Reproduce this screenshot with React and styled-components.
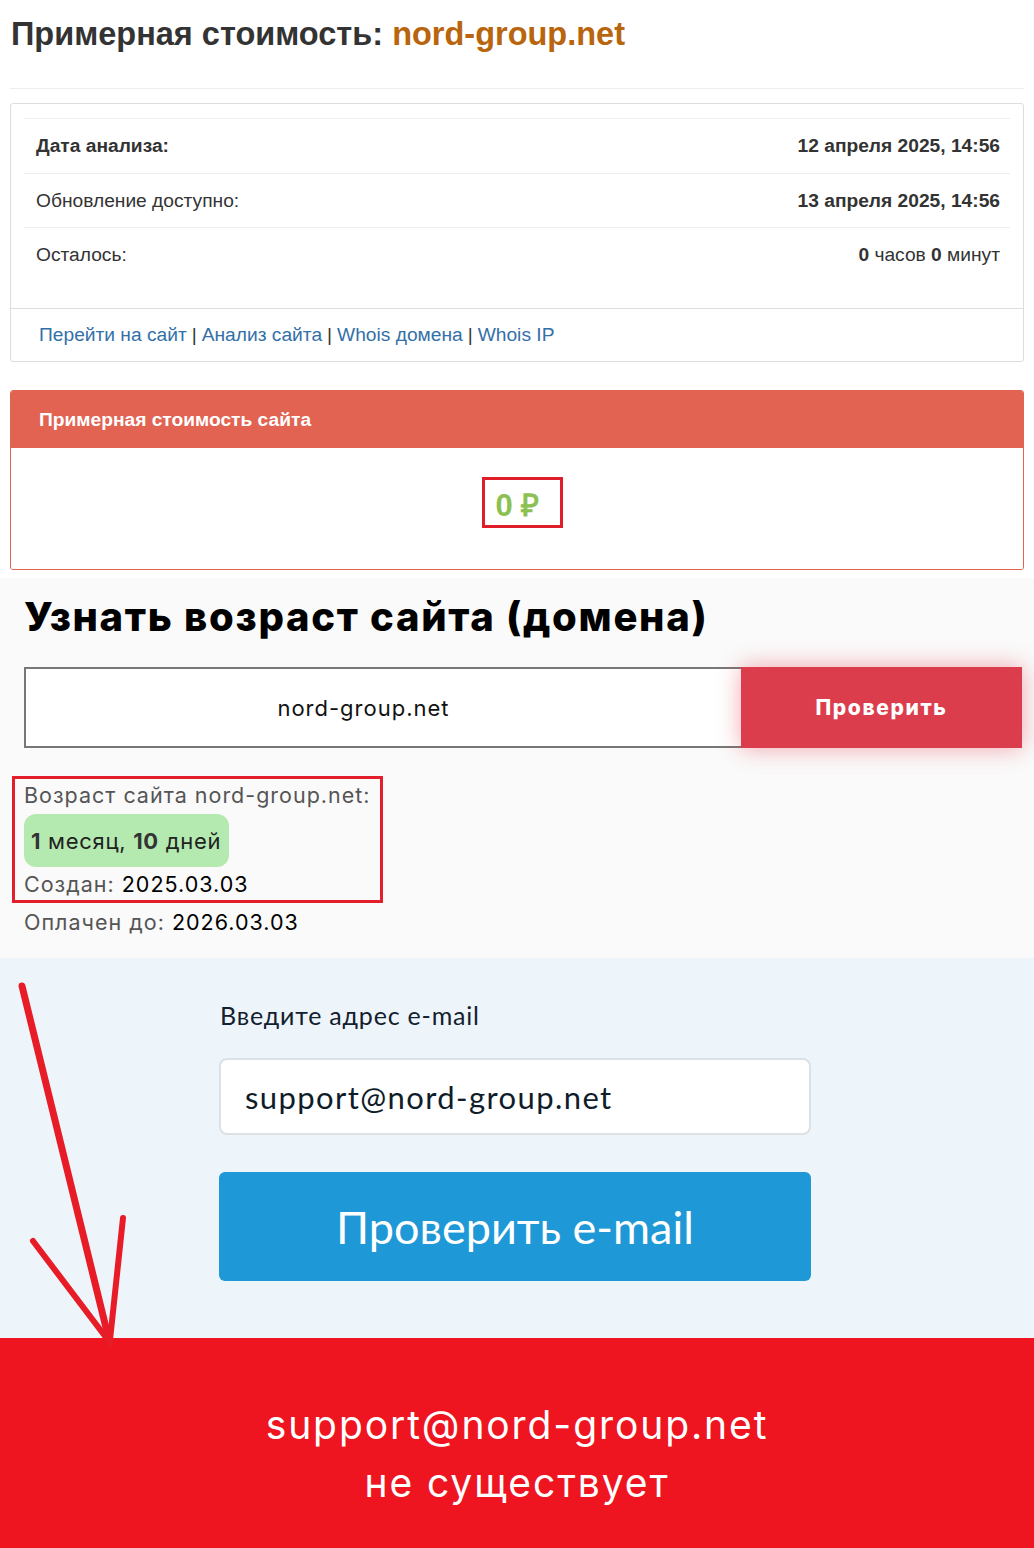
import React from "react";
import styled, { createGlobalStyle } from "styled-components";

const Global = createGlobalStyle`
  html, body { margin: 0; padding: 0; background: #fff; }
  body { width: 1034px; }
  * { box-sizing: border-box; }
`;

const Page = styled.div`
  position: relative;
  width: 1034px;
  font-family: "Liberation Sans", Arial, sans-serif;
`;

/* ---------- section 1 ---------- */
const CostSection = styled.section`
  background: #fff;
  padding: 14px 10px 8px;
`;

const Title = styled.h1`
  margin: 0;
  font-size: 32.5px;
  line-height: 40px;
  font-weight: 700;
  color: #333;
  padding-left: 1px;
`;

const Domain = styled.span`
  color: #b8650e;
`;

const Rule = styled.hr`
  border: 0;
  border-top: 1px solid #eee;
  margin: 34px 0 14px;
`;

const Card = styled.div`
  border: 1px solid #ddd;
  border-radius: 3px;
  background: #fff;
`;

const CardBody = styled.div`
  padding: 14px 13px 27px;
`;

const Table = styled.div`
  border-top: 1px solid #eee;
`;

const Row = styled.div`
  display: flex;
  justify-content: space-between;
  align-items: center;
  height: 54px;
  padding: 0 10px 0 12px;
  border-top: ${(p) => (p.$first ? "none" : "1px solid #eee")};
  font-size: 19.2px;
  color: #333;
`;

const Label = styled.span`
  font-weight: ${(p) => (p.$bold ? 700 : 400)};
`;

const Value = styled.span`
  font-weight: ${(p) => (p.$bold ? 700 : 400)};
  b { font-weight: 700; }
`;

const CardFooter = styled.div`
  border-top: 1px solid #ddd;
  height: 53px;
  display: flex;
  align-items: center;
  padding-left: 28px;
  font-size: 19.2px;
  color: #333;
`;

const Link = styled.a`
  color: #3370a8;
  text-decoration: none;
`;

const Sep = styled.span`
  margin: 0 5px;
`;

const PricePanel = styled.div`
  margin-top: 28px;
  border: 1px solid #e26351;
  border-radius: 3px;
  overflow: hidden;
`;

const PanelHead = styled.div`
  background: #e26352;
  height: 57px;
  display: flex;
  align-items: center;
  padding-left: 28px;
  color: #fff;
  font-weight: 700;
  font-size: 19.2px;
`;

const PanelBody = styled.div`
  height: 121px;
  display: flex;
  justify-content: center;
  padding: 29px 0 0 10px;
  background: #fff;
`;

const PriceBox = styled.div`
  border: 3px solid #e01e2a;
  width: 81px;
  height: 51px;
  display: flex;
  align-items: center;
  padding: 2px 0 0 11px;
  font-size: 31px;
  font-weight: 700;
  color: #8cc152;
  white-space: nowrap;
`;

/* ---------- section 2 ---------- */
const AgeSection = styled.section`
  background: #fafafa;
  padding: 14px 12px 22px 24px;
  font-family: "Inter", "Noto Sans", sans-serif;
`;

const AgeTitle = styled.h2`
  margin: 0;
  font-size: 40px;
  line-height: 50px;
  font-weight: 800;
  color: #000;
  letter-spacing: 1.7px;
`;

const SearchRow = styled.div`
  display: flex;
  margin-top: 25px;
  height: 81px;
`;

const DomainInput = styled.div`
  flex: 1;
  border: 2px solid #777;
  border-right: 0;
  background: #fff;
  display: flex;
  align-items: center;
  justify-content: center;
  padding-right: 40px;
  font-size: 22px;
  letter-spacing: 1px;
  color: #111;
`;

const CheckButton = styled.div`
  width: 281px;
  background: #dc3d4d;
  color: #fff;
  font-weight: 800;
  font-size: 21px;
  letter-spacing: 1.6px;
  display: flex;
  align-items: center;
  justify-content: center;
  box-shadow: 0 0 22px rgba(230, 60, 75, 0.45);
`;

const ResultBox = styled.div`
  margin: 28px 0 0 -12px;
  width: 371px;
  border: 3px solid #e21f2b;
  padding: 2px 0 0 9px;
  height: 127px;
`;

const InfoLine = styled.div`
  font-size: 21.5px;
  line-height: 28px;
  letter-spacing: 1px;
  color: #555;
  white-space: nowrap;
  b { font-weight: 400; color: #000; }
`;

const AgePill = styled.div`
  display: inline-flex;
  align-items: center;
  height: 53px;
  margin: 5px 0 3px;
  padding: 0 8px 0 7px;
  border-radius: 12px;
  background: #b4eab0;
  font-size: 22px;
  letter-spacing: 0.7px;
  color: #222;
  b { font-weight: 700; color: #333; }
`;

const PaidLine = styled(InfoLine)`
  margin-top: 5px;
`;

/* ---------- section 3 ---------- */
const MailSection = styled.section`
  background: #eef5fa;
  padding: 40px 4px 57px 0;
  display: flex;
  justify-content: center;
  font-family: "Lato", "Noto Sans", sans-serif;
`;

const MailForm = styled.div`
  width: 592px;
  display: flex;
  flex-direction: column;
`;

const MailLabel = styled.div`
  font-size: 25px;
  line-height: 34px;
  letter-spacing: 0.8px;
  color: #13202e;
  padding-left: 1px;
`;

const MailInput = styled.div`
  margin-top: 26px;
  height: 77px;
  background: #fff;
  border: 2px solid #dde1e4;
  border-radius: 8px;
  display: flex;
  align-items: center;
  padding-left: 24px;
  font-size: 31px;
  letter-spacing: 1.4px;
  color: #0f1c2a;
`;

const MailButton = styled.div`
  margin-top: 37px;
  height: 109px;
  border-radius: 6px;
  background: #1e98d6;
  color: #fff;
  font-size: 45px;
  display: flex;
  align-items: center;
  justify-content: center;
`;

/* ---------- section 4 ---------- */
const ErrorSection = styled.section`
  background: #ee1520;
  height: 212px;
  padding-top: 58px;
  text-align: center;
  color: #fff;
  font-family: "Inter", "Noto Sans", sans-serif;
  font-size: 39px;
  line-height: 58px;
  letter-spacing: 1.9px;
`;

const ArrowLayer = styled.svg`
  position: absolute;
  left: 0;
  top: 0;
  pointer-events: none;
`;

export default function App() {
  return (
    <Page>
      <Global />
      <CostSection>
        <Title>
          Примерная стоимость: <Domain>nord-group.net</Domain>
        </Title>
        <Rule />
        <Card>
          <CardBody>
            <Table>
              <Row $first>
                <Label $bold>Дата анализа:</Label>
                <Value $bold>12 апреля 2025, 14:56</Value>
              </Row>
              <Row>
                <Label>Обновление доступно:</Label>
                <Value $bold>13 апреля 2025, 14:56</Value>
              </Row>
              <Row>
                <Label>Осталось:</Label>
                <Value>
                  <b>0</b> часов <b>0</b> минут
                </Value>
              </Row>
            </Table>
          </CardBody>
          <CardFooter>
            <Link>Перейти на сайт</Link>
            <Sep>|</Sep>
            <Link>Анализ сайта</Link>
            <Sep>|</Sep>
            <Link>Whois домена</Link>
            <Sep>|</Sep>
            <Link>Whois IP</Link>
          </CardFooter>
        </Card>
        <PricePanel>
          <PanelHead>Примерная стоимость сайта</PanelHead>
          <PanelBody>
            <PriceBox>0 ₽</PriceBox>
          </PanelBody>
        </PricePanel>
      </CostSection>

      <AgeSection>
        <AgeTitle>Узнать возраст сайта (домена)</AgeTitle>
        <SearchRow>
          <DomainInput>nord-group.net</DomainInput>
          <CheckButton>Проверить</CheckButton>
        </SearchRow>
        <ResultBox>
          <InfoLine>Возраст сайта nord-group.net:</InfoLine>
          <AgePill>
            <span>
              <b>1</b> месяц, <b>10</b> дней
            </span>
          </AgePill>
          <InfoLine>
            Создан: <b>2025.03.03</b>
          </InfoLine>
        </ResultBox>
        <PaidLine>
          Оплачен до: <b>2026.03.03</b>
        </PaidLine>
      </AgeSection>

      <MailSection>
        <MailForm>
          <MailLabel>Введите адрес e-mail</MailLabel>
          <MailInput>support@nord-group.net</MailInput>
          <MailButton>Проверить e-mail</MailButton>
        </MailForm>
      </MailSection>

      <ErrorSection>
        <div>support@nord-group.net</div>
        <div>не существует</div>
      </ErrorSection>

      <ArrowLayer width="1034" height="1548" viewBox="0 0 1034 1548">
        <g stroke="#e81c27" strokeLinecap="round" fill="none">
          <path d="M22 986 L110 1344" strokeWidth="7" />
          <path d="M33 1241 L108 1340" strokeWidth="6" />
          <path d="M123 1218 L110 1340" strokeWidth="6" />
        </g>
      </ArrowLayer>
    </Page>
  );
}
